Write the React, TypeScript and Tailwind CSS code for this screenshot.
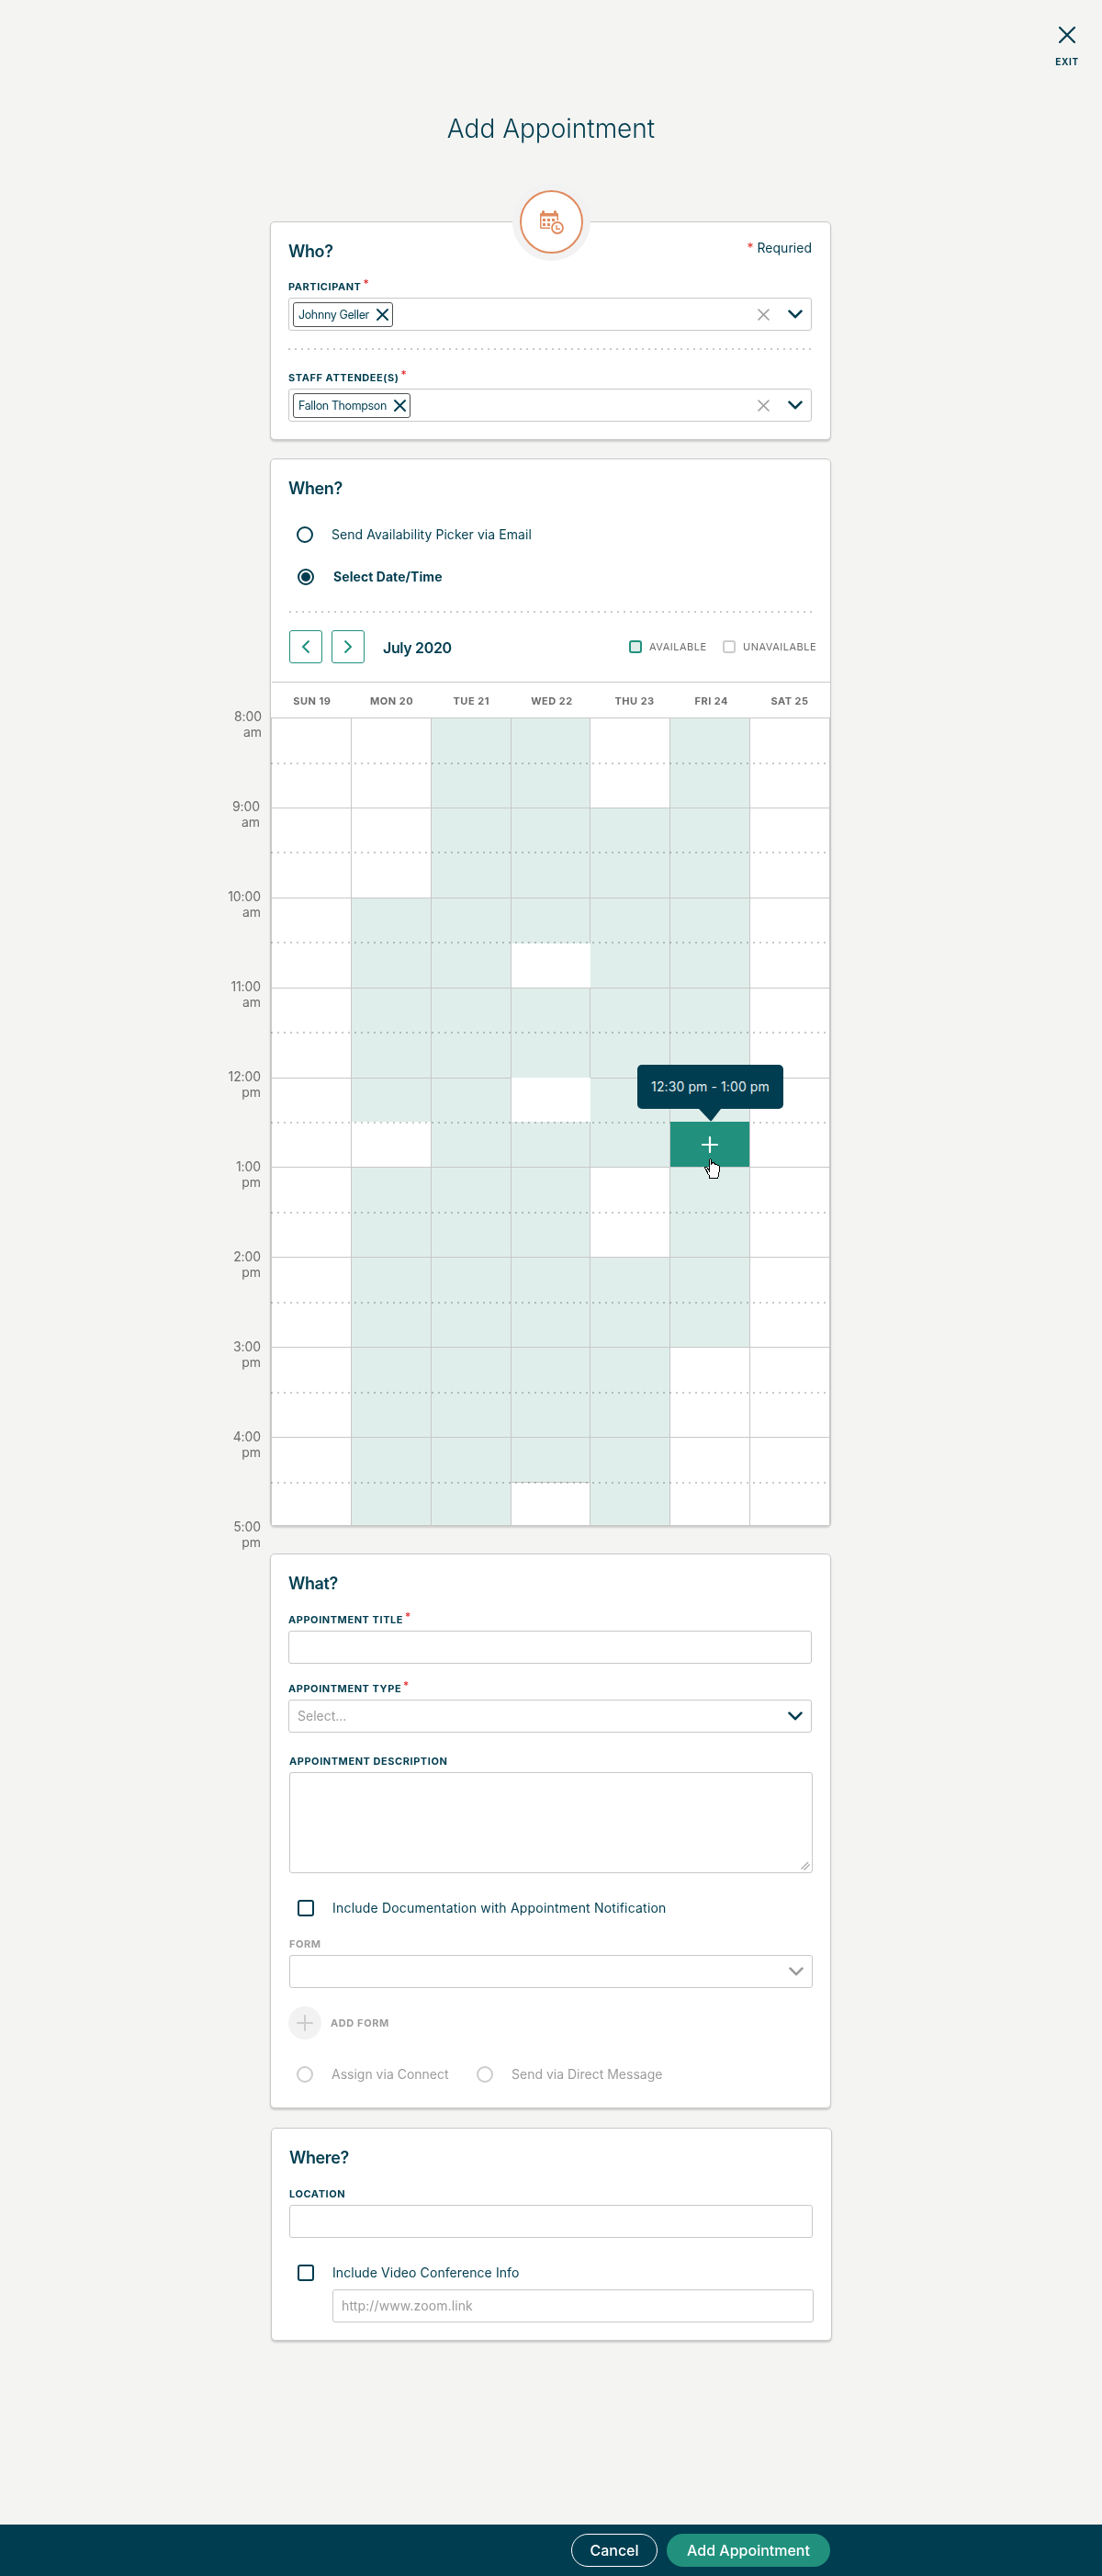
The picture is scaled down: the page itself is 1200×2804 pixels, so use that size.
import React from "react";

const DAYS = [
  { name: "SUN 19", pad: "pl-px" },
  { name: "MON 20", pad: "pl-px" },
  { name: "TUE 21", pad: "pl-px" },
  { name: "WED 22", pad: "pl-[3px]" },
  { name: "THU 23", pad: "pl-[10px]" },
  { name: "FRI 24", pad: "pl-[4px]" },
  { name: "SAT 25", pad: "pl-px" },
];

const COLUMN_WIDTHS = ["w-[87px]", "w-[87px]", "w-[87px]", "w-[86px]", "w-[87px]", "w-[87px]", "w-[88px]"];

// One string per day; each character is a half hour starting at 8:00 am.
// "1" available, "0" unavailable, "s" selected, "w" unavailable without its right rule,
// "t" unavailable with a rule along its top.
const SLOTS = [
  "000000000000000000",
  "000011111011111111",
  "111111111111111111",
  "11111w11w11111111t",
  "001111111100111111",
  "111111111s11110000",
  "000000000000000000",
];

const HOURS = [
  { height: "h-[98px]", first: "h-[48px]", dots: "top-[49px]" },
  { height: "h-[98px]", first: "h-[48px]", dots: "top-[48px]" },
  { height: "h-[98px]", first: "h-[49px]", dots: "top-[48px]" },
  { height: "h-[98px]", first: "h-[48px]", dots: "top-[48px]" },
  { height: "h-[97px]", first: "h-[47px]", dots: "top-[48px]" },
  { height: "h-[98px]", first: "h-[48px]", dots: "top-[49px]" },
  { height: "h-[98px]", first: "h-[48px]", dots: "top-[49px]" },
  { height: "h-[98px]", first: "h-[48px]", dots: "top-[49px]" },
  { height: "h-[96px]", first: "h-[48px]", dots: "top-[49px]" },
];

const TIMES = [
  { time: "8:00", half: "am", pad: "pr-[9px]" },
  { time: "9:00", half: "am", pad: "pr-[11px]" },
  { time: "10:00", half: "am", pad: "pr-[10px]" },
  { time: "11:00", half: "am", pad: "pr-[10px]" },
  { time: "12:00", half: "pm", pad: "pr-[10px]" },
  { time: "1:00", half: "pm", pad: "pr-[10px]" },
  { time: "2:00", half: "pm", pad: "pr-[10px]" },
  { time: "3:00", half: "pm", pad: "pr-[10px]" },
  { time: "4:00", half: "pm", pad: "pr-[10px]" },
  { time: "5:00", half: "pm", pad: "pr-[10px]" },
];

function Cross({ size, className, width = 2 }: { size: number; className: string; width?: number }) {
  return (
    <svg width={size} height={size} viewBox={`0 0 ${size} ${size}`} className={`shrink-0 ${className}`} fill="none" stroke="currentColor" strokeWidth={width} strokeLinecap="round">
      <path d={`M1 1L${size - 1} ${size - 1}M${size - 1} 1L1 ${size - 1}`} />
    </svg>
  );
}

function ChevronDown() {
  return (
    <svg width="16" height="10" viewBox="0 0 16 10" className="shrink-0" fill="none" stroke="currentColor" strokeWidth="2.6" strokeLinecap="round" strokeLinejoin="round">
      <path d="M1.5 1.6L8 8.2L14.5 1.6" />
    </svg>
  );
}

function Plus({ className, width = 2 }: { className: string; width?: number }) {
  return (
    <svg width="18" height="18" viewBox="0 0 18 18" className={className} fill="none" stroke="currentColor" strokeWidth={width} strokeLinecap="round">
      <path d="M9 1V17M1 9H17" />
    </svg>
  );
}

function Dots({ className = "" }: { className?: string }) {
  return <div className={`h-[2px] bg-[repeating-linear-gradient(to_right,#c9c9c9_0_2px,transparent_2px_7px)] ${className}`} />;
}

function Heading({ children }: { children: React.ReactNode }) {
  return <h2 className="h-[21px] text-[18px] leading-[21px] font-semibold tracking-[-0.4px]">{children}</h2>;
}

function Label({ children, required, className = "" }: { children: React.ReactNode; required?: boolean; className?: string }) {
  return (
    <div className={`flex h-[16px] text-[11px] leading-[16px] font-bold tracking-[0.55px] ${className}`}>
      {children}
      {required && <span className="-mt-[3px] ml-[2px] text-[12px] font-medium tracking-normal text-[#e02b2b]">*</span>}
    </div>
  );
}

function Box({ children, className = "" }: { children?: React.ReactNode; className?: string }) {
  return <div className={`mt-1 flex h-9 w-[570px] items-center rounded-[3px] border border-[#c8c8c8] bg-white ${className}`}>{children}</div>;
}

function Card({ children, className = "" }: { children: React.ReactNode; className?: string }) {
  return (
    <section className={`relative w-[611px] rounded-[5px] border border-[#c8c8c8] bg-white shadow-[0_2px_2px_rgba(0,0,0,0.16)] ${className}`}>
      {children}
    </section>
  );
}

function PersonSelect({ name, nameClass }: { name: string; nameClass: string }) {
  return (
    <Box className="justify-between pr-[9px] pl-1">
      <div className="flex h-[27px] items-center rounded-[3px] border border-[#4c4f52] pr-1 pl-[5px]">
        <span className={`text-[12.5px] leading-[25px] tracking-[-0.38px] whitespace-nowrap ${nameClass}`}>{name}</span>
        <Cross size={13} className="" width={1.9} />
      </div>
      <div className="flex items-center gap-5">
        <Cross size={13} className="text-[#9b9b9b]" width={1.6} />
        <ChevronDown />
      </div>
    </Box>
  );
}

function Radio({ checked, muted }: { checked?: boolean; muted?: boolean }) {
  return (
    <span className={`flex size-[18px] shrink-0 items-center justify-center rounded-full border-2 ${muted ? "border-[#ccc]" : "border-[#003d50]"}`}>
      {checked && <span className="size-[10px] rounded-full bg-[#003d50]" />}
    </span>
  );
}

function Checkbox() {
  return <span className="size-[18px] shrink-0 rounded-[3px] border-2 border-[#003d50]" />;
}

function CalendarClock() {
  return (
    <svg width="27" height="27" viewBox="0 0 27 27" fill="none" className="text-[#e08b5f]">
      <path d="M1.75 5.5V19.5Q1.75 20.25 2.5 20.25H12M20.25 5V12" stroke="currentColor" strokeWidth="1.5" />
      <path d="M1 5Q1 4 2 4H3V2.5Q3 1 4.5 1T6 2.5V4H16V2.5Q16 1 17.5 1T19 2.5V4H20Q21 4 21 5V7.5H1Z" fill="currentColor" />
      <path d="M4 10H7V13H4ZM9 10H12V13H9ZM14 10H17V13H14ZM4 15H7V18H4ZM9 15H12V18H9Z" fill="currentColor" />
      <circle cx="20" cy="20" r="6" fill="white" stroke="currentColor" strokeWidth="1.8" />
      <path d="M19 17V21.2H23" stroke="currentColor" strokeWidth="1.4" />
    </svg>
  );
}

function HandCursor() {
  return (
    <svg width="17" height="22" viewBox="0 0 17 22" shapeRendering="crispEdges" className="absolute top-[40px] left-[37px] z-30">
      <path
        d="M5.5 15V1.5L6.5 .5L7.5 1.5V6L8.5 4.8H10.5L11.5 6H13.5L14.5 7.5H15.5L16.5 9V14L15.5 16V19L14.5 21.5H6L5.5 19L3.5 16L2.5 13L.5 10.5V9.5H2.5L4.5 12L5.5 13Z"
        fill="white"
        stroke="black"
      />
    </svg>
  );
}

function SelectedSlot() {
  return (
    <div className="relative flex-1">
      <div className="absolute inset-0 z-10 flex items-center justify-center bg-[#21917e]">
        <Plus className="text-white" width={2.2} />
        <HandCursor />
      </div>
      <div className="absolute top-[-62px] left-[-36px] z-20 flex h-12 w-[159px] items-center justify-center rounded-[5px] bg-[#003d50]">
        <span className="text-[14px] leading-[48px] tracking-[0.1px] whitespace-nowrap text-[#e4edef]">12:30 pm - 1:00 pm</span>
        <svg width="24" height="14" viewBox="0 0 24 14" className="absolute top-[48px] left-[67px] text-[#003d50]">
          <path d="M0 0H24L13.7 13.3L12.6 13.3Z" fill="currentColor" />
        </svg>
      </div>
    </div>
  );
}

function Slot({ state, first }: { state: string; first?: string }) {
  const size = first ?? "flex-1";
  if (state === "s") return <SelectedSlot />;
  if (state === "w") return <div className={`relative z-[1] -mr-px bg-white ${first ? "-mt-px h-[48px]" : "flex-1"}`} />;
  if (state === "t") return <div className="flex-1 border-t border-[#c8c8c8] bg-white" />;
  return <div className={`${size} ${state === "1" ? "bg-[#dfeeea]" : "bg-white"}`} />;
}

function WeekGrid() {
  return (
    <div className="mx-auto w-[609px]">
      {HOURS.map((hour, h) => (
        <div key={h} className={`relative flex ${hour.height}`}>
          {SLOTS.map((day, d) => (
            <div key={d} className={`flex flex-col border-t border-l border-[#c8c8c8] ${COLUMN_WIDTHS[d]} ${d === 6 ? "border-r" : ""}`}>
              <Slot state={day[h * 2]} first={hour.first} />
              <Slot state={day[h * 2 + 1]} />
            </div>
          ))}
          <Dots className={`absolute left-0 z-[2] w-[604px] mix-blend-multiply ${hour.dots}`} />
        </div>
      ))}
    </div>
  );
}

export default function App() {
  return (
    <div className="flex h-[2804px] w-[1200px] flex-col bg-[#f4f4f2] font-['Inter',sans-serif] text-[#003d50]">
      <header className="flex flex-col">
        <button className="mt-[29px] mr-[14px] flex w-12 flex-col items-center self-end">
          <Cross size={18} className="" width={2.2} />
          <span className="mt-[13px] text-[10px] leading-[14px] font-bold tracking-[0.6px]">EXIT</span>
        </button>
        <h1 className="mt-[48px] text-center text-[28px] leading-[36px] font-light">Add Appointment</h1>
      </header>

      <Card className="mt-[83px] ml-[294px] h-[238px] px-[19px] pt-[21px]">
        <div className="absolute -top-[43px] left-[263px] flex size-[85px] items-center justify-center rounded-full bg-[#f2f2f2]">
          <div className="flex size-[69px] items-center justify-center rounded-full border-2 border-[#e08b5f] bg-white">
            <CalendarClock />
          </div>
        </div>
        <div className="flex w-[570px] justify-between">
          <Heading>Who?</Heading>
          <div className="-mt-[3px] text-[14px] leading-[20px]">
            <span className="text-[#e02b2b]">*</span> Requried
          </div>
        </div>
        <Label required className="mt-5">PARTICIPANT</Label>
        <PersonSelect name="Johnny Geller" nameClass="w-[85px]" />
        <Dots className="mt-[19px] w-[570px]" />
        <Label required className="mt-[22px]">STAFF ATTENDEE(S)</Label>
        <PersonSelect name="Fallon Thompson" nameClass="w-[104px]" />
      </Card>

      <div className="mt-5 flex items-start">
        <div className="w-[294px] pt-[272px] text-right text-[14px] leading-[17px] tracking-[-0.1px] text-[#6b6b6b]">
          {TIMES.map((t, i) => (
            <div key={t.time} className={`${i < 9 ? "h-[98px]" : "h-[34px]"} ${t.pad}`}>
              {t.time}
              <br />
              {t.half}
            </div>
          ))}
        </div>
        <Card className="h-[1162px] pt-[21px]">
          <div className="pl-[19px]">
            <Heading>When?</Heading>
            <div className="mt-[31px] ml-[9px] flex h-[18px] items-center gap-5 text-[14px] leading-[18px] tracking-[0.06px]">
              <Radio />
              <span>Send Availability Picker via Email</span>
            </div>
            <div className="mt-7 ml-[10px] flex h-[18px] items-center gap-[21px] text-[14px] leading-[18px] font-bold tracking-[0.06px]">
              <Radio checked />
              <span>Select Date/Time</span>
            </div>
            <Dots className="mt-7 ml-px w-[569px]" />
            <div className="mt-[19px] ml-px flex h-9 items-center">
              <button className="flex size-9 items-center justify-center rounded-[3px] border border-[#21917e] text-[#21917e]">
                <svg width="10" height="16" viewBox="0 0 10 16" fill="none" stroke="currentColor" strokeWidth="2">
                  <path d="M8.5 1.5L2 8L8.5 14.5" />
                </svg>
              </button>
              <button className="ml-[10px] flex size-9 items-center justify-center rounded-[3px] border border-[#21917e] text-[#21917e]">
                <svg width="10" height="16" viewBox="0 0 10 16" fill="none" stroke="currentColor" strokeWidth="2">
                  <path d="M1.5 1.5L8 8L1.5 14.5" />
                </svg>
              </button>
              <span className="ml-5 w-[267px] pt-px text-[16px] leading-[36px] font-semibold tracking-[-0.35px]">July 2020</span>
              <div className="flex items-center text-[11px] tracking-[0.5px] text-[#6b6b6b]">
                <span className="ml-px size-[14px] rounded-[3px] border-2 border-[#21917e] bg-[#dfeeea]" />
                <span className="ml-2 w-[80px]">AVAILABLE</span>
                <span className="size-[14px] rounded-[3px] border-2 border-[#ccc]" />
                <span className="ml-2">UNAVAILABLE</span>
              </div>
            </div>
          </div>
          <div className="mt-5 ml-px flex h-[39px] w-[608px] border-t border-[#c8c8c8] pt-3">
            {DAYS.map((day) => (
              <span key={day.name} className={`w-[86.7px] text-center text-[11px] leading-[16px] font-bold tracking-[0.5px] text-[#6b6b6b] ${day.pad}`}>
                {day.name}
              </span>
            ))}
          </div>
          <WeekGrid />
        </Card>
      </div>

      <Card className="mt-1 ml-[294px] h-[604px] px-[19px] pt-[21px]">
        <Heading>What?</Heading>
        <Label required className="mt-[21px]">APPOINTMENT TITLE</Label>
        <Box />
        <Label required className="mt-[19px]">APPOINTMENT TYPE</Label>
        <Box className="justify-between pr-[9px] pl-[9px]">
          <span className="text-[14px] leading-[34px] text-[#9b9b9b]">Select...</span>
          <ChevronDown />
        </Box>
        <div className="pl-px">
          <Label className="mt-[23px]">APPOINTMENT DESCRIPTION</Label>
          <div className="mt-1 flex h-[110px] w-[570px] items-end justify-end rounded-[3px] border border-[#c8c8c8] p-[2px]">
            <svg width="10" height="10" viewBox="0 0 10 10" fill="none" stroke="#9b9b9b" strokeWidth="1.1">
              <path d="M.5 8.5L8.2.8M3.5 9.5L9.6 3.4" />
            </svg>
          </div>
          <div className="mt-[29px] ml-[9px] flex h-[18px] items-center gap-5 text-[14px] leading-[18px] tracking-[0.2px]">
            <Checkbox />
            <span>Include Documentation with Appointment Notification</span>
          </div>
          <Label className="mt-[22px] text-[#9b9b9b]">FORM</Label>
          <Box className="justify-end pr-[9px] text-[#9b9b9b]">
            <ChevronDown />
          </Box>
        </div>
        <div className="mt-5 flex items-center">
          <span className="flex size-9 items-center justify-center rounded-full bg-[#f2f2f2]">
            <Plus className="text-[#ccc]" />
          </span>
          <span className="ml-[10px] text-[11px] font-bold tracking-[0.6px] text-[#9b9b9b]">ADD FORM</span>
        </div>
        <div className="mt-[29px] ml-[9px] flex h-[18px] items-center text-[14px] leading-[18px] text-[#9b9b9b]">
          <Radio muted />
          <span className="ml-5 w-[158px]">Assign via Connect</span>
          <Radio muted />
          <span className="ml-5">Send via Direct Message</span>
        </div>
      </Card>

      <Card className="mt-[21px] ml-[295px] h-[232px] px-[19px] pt-[21px]">
        <Heading>Where?</Heading>
        <Label className="mt-[21px]">LOCATION</Label>
        <Box />
        <div className="mt-[29px] ml-[9px] flex h-[18px] items-center gap-5 text-[14px] leading-[18px] tracking-[0.08px]">
          <Checkbox />
          <span>Include Video Conference Info</span>
        </div>
        <div className="mt-[9px] ml-[47px] h-9 w-[524px] rounded-[3px] border border-[#c8c8c8] pl-[9px] text-[14px] leading-[34px] tracking-[0.12px] text-[#9b9b9b]">
          http://www.zoom.link
        </div>
      </Card>

      <footer className="mt-[200px] flex h-14 items-center gap-[10px] bg-[#003d50] pl-[622px] text-[16px] font-medium text-white">
        <button className="h-9 w-[94px] rounded-full border border-white">Cancel</button>
        <button className="h-9 w-[178px] rounded-full bg-[#21917e]">Add Appointment</button>
      </footer>
    </div>
  );
}
